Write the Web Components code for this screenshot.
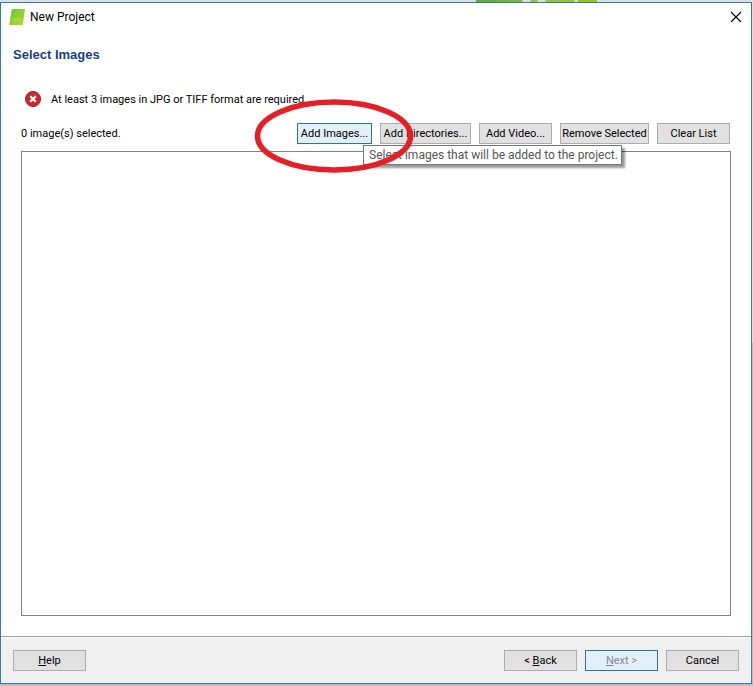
<!DOCTYPE html>
<html lang="en">
<head>
<meta charset="utf-8">
<title>New Project</title>
<style>
html, body { height: 100%; margin: 0; }
body { background: #d5dde2; font-family: Roboto, Tahoma, sans-serif; font-size: 11px; color: #000; }
</style>
</head>
<body>
<project-wizard></project-wizard>
<script>
const define = (name, html) => customElements.define(name, class extends HTMLElement {
  constructor() {
    super();
    const t = document.createElement('template');
    t.innerHTML = html;
    this.attachShadow({ mode: 'open' }).append(t.content.cloneNode(true));
  }
  connectedCallback() {
    const b = this.shadowRoot.querySelector('button');
    if (b && this.hasAttribute('disabled')) b.disabled = true;
  }
});

define('push-button', `
<style>
:host { display: block; min-width: 73px; }
button { box-sizing: border-box; width: 100%; height: 21px; padding: 0; border: 1px solid #adadad; background: #e1e1e1; color: #000; font: inherit; line-height: 19px; text-align: center; white-space: nowrap; }
:host([active]) button { border-color: #2a779b; background: #e3f0fa; }
button:disabled { color: #858b91; }
</style>
<button type="button"><slot></slot></button>`);

define('title-bar', `
<style>
:host { display: flex; align-items: center; gap: 5px; height: 28px; padding: 0 9px 0 8px; font-size: 12px; }
span { flex: 1; }
button { display: flex; padding: 0; border: 0; background: none; }
svg { display: block; }
</style>
<svg width="16" height="16" viewBox="0 0 16 16" aria-hidden="true">
  <defs><linearGradient id="g" x1="0" y1="0" x2="1" y2="1"><stop offset="0" stop-color="#6cbf45"/><stop offset=".5" stop-color="#8fd02f"/><stop offset="1" stop-color="#b9dc1c"/></linearGradient></defs>
  <path d="M2.8 0H16L13.7 16H0.2Z" fill="url(#g)"/>
  <path d="M3.5 12C3.5 9 6 8.8 6.5 10.8M6.5 12.3C6.5 9 9.5 8.7 9.2 12M10.2 12.3L11.6 8" fill="none" stroke="#b4e468" stroke-width="1"/>
</svg>
<span><slot></slot></span>
<button type="button" aria-label="Close"><svg width="12" height="12" viewBox="0 0 12 12"><path d="M1 1L11 11M11 1L1 11" stroke="#000" stroke-width="1.1"/></svg></button>`);

define('status-message', `
<style>
:host { display: flex; align-items: center; gap: 9px; height: 18px; padding-left: 3px; }
svg { display: block; }
</style>
<svg width="18" height="18" viewBox="0 0 18 18" aria-hidden="true">
  <circle cx="9" cy="9" r="7.6" fill="#d2232a" stroke="#8f3337" stroke-width="1"/>
  <path d="M6.2 6.2L11.8 11.8M11.8 6.2L6.2 11.8" stroke="#fff" stroke-width="2.2"/>
</svg>
<span><slot></slot></span>`);

define('tool-tip', `
<style>
:host { display: block; box-sizing: border-box; height: 20px; padding: 0 5px; border: 1px solid #767676; background: #fff; color: #575757; font-size: 12px; line-height: 18px; white-space: nowrap; box-shadow: 3px 3px 2px #0006; }
</style>
<slot></slot>`);

define('hand-marker', `
<style>
:host { display: block; pointer-events: none; }
svg { display: block; }
</style>
<svg width="160" height="74" viewBox="0 0 160 74" aria-hidden="true"><ellipse cx="80" cy="37" rx="76.5" ry="34" fill="none" stroke="#e51f26" stroke-width="5.6"/></svg>`);

define('image-toolbar', `
<style>
:host { display: flex; align-items: center; justify-content: space-between; }
.actions { display: grid; grid-template-columns: 75px 91px 73px 89px 73px; gap: 8px; margin-right: 1px; }
.target { position: relative; }
tool-tip { position: absolute; left: 66px; top: 22px; z-index: 1; width: 259px; }
hand-marker { position: absolute; left: -43px; top: -24px; z-index: 2; }
</style>
<span>0 image(s) selected.</span>
<div class="actions">
  <div class="target">
    <push-button active>Add Images...</push-button>
    <tool-tip role="tooltip">Select images that will be added to the project.</tool-tip>
    <hand-marker></hand-marker>
  </div>
  <push-button>Add Directories...</push-button>
  <push-button>Add Video...</push-button>
  <push-button>Remove Selected</push-button>
  <push-button>Clear List</push-button>
</div>`);

define('image-list', `
<style>:host { display: block; box-sizing: border-box; border: 1px solid #828282; background: #fff; }</style>
<slot></slot>`);

define('wizard-footer', `
<style>
:host { display: flex; gap: 8px; padding: 13px 12px 12px; border-top: 1px solid #a0a0a0; background: #f0f0f0; box-shadow: inset 0 1px #fff; }
.space { flex: 1; }
</style>
<push-button><u>H</u>elp</push-button>
<div class="space"></div>
<push-button>&lt; <u>B</u>ack</push-button>
<push-button active disabled><u>N</u>ext &gt;</push-button>
<push-button>Cancel</push-button>`);

define('project-wizard', `
<style>
:host { display: flex; flex-direction: column; box-sizing: border-box; height: 100%; padding: 2px 1px 2px 0;
  background: linear-gradient(90deg, #5faa3c, #7cb947 46px, #d8e6d8 47px 54px, #8fc050 55px 61px, #d8e6d8 62px 69px, #8ec63f 70px 98px, #d8e6d8 99px 101px, #9cc21e 102px) 476px 0 / 121px 2px no-repeat, linear-gradient(#d8e0e5 50%, #b8bfc5 50%); }
.window { flex: 1; display: flex; flex-direction: column; border: 1px solid #3c7b9c; background: #fff; }
main { flex: 1; display: flex; flex-direction: column; padding: 0 20px; }
h1 { margin: 14px 0 0 -8px; font: bold 13px/20px "Liberation Sans", Arial, sans-serif; color: #1b3f86; }
status-message { margin-top: 25px; }
image-toolbar { margin-top: 15px; }
image-list { flex: 1; margin: 7px 0 20px; }
</style>
<div class="window">
  <title-bar>New Project</title-bar>
  <main>
    <h1>Select Images</h1>
    <status-message>At least 3 images in JPG or TIFF format are required.</status-message>
    <image-toolbar></image-toolbar>
    <image-list role="listbox" aria-label="Images"></image-list>
  </main>
  <wizard-footer></wizard-footer>
</div>`);
</script>
</body>
</html>
